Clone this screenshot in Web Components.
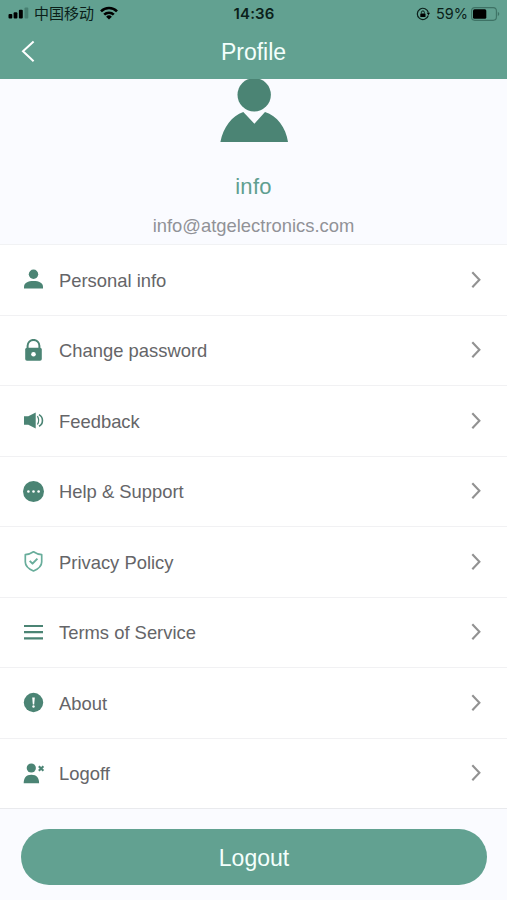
<!DOCTYPE html>
<html lang="en">
<head>
<meta charset="utf-8">
<title>Profile</title>
<style>
html,body{margin:0;height:100%}
body{background:#fafbff;font-family:"Liberation Sans","Noto Sans CJK SC",sans-serif}
</style>
</head>
<body>
<profile-screen></profile-screen>
<script>
const define = (name, html, setup) => {
  const template = document.createElement('template');
  template.innerHTML = html;
  customElements.define(name, class extends HTMLElement {
    constructor() {
      super();
      this.attachShadow({ mode: 'open' }).append(template.content.cloneNode(true));
    }
    connectedCallback() { if (setup) setup(this, this.shadowRoot); }
  });
};

const icons = {
  person: '<circle cx="11.5" cy="6.3" r="4.7"/><path d="M2 20.6v-1.8c0-4 4-5.9 9.5-5.9s9.5 1.9 9.5 5.9v1.8z"/>',
  lock: '<path d="M5.6 10V6.8a5.9 5.9 0 0 1 11.8 0V10" fill="none" stroke="currentColor" stroke-width="2"/><rect x="3.2" y="8.7" width="16.6" height="13" rx="1.8"/><circle cx="11.5" cy="15.2" r="2.3" fill="#fff"/>',
  sound: '<path d="M2 7.300h4.300L13.700 3.400v16.200L6.300 15.700H2z"/><path d="M15.400 7.100q2.600 4.200 0 8.400" fill="none" stroke="currentColor" stroke-width="1.200"/><path d="M17 5.600c4.600 2.400 4.600 9.400 0 11.600" fill="none" stroke="currentColor" stroke-width="1.600"/>',
  more: '<circle cx="11.5" cy="11.5" r="10.5"/><g fill="#fff"><circle cx="6.400" cy="11.500" r="1.300"/><circle cx="11.500" cy="11.500" r="1.300"/><circle cx="16.600" cy="11.500" r="1.300"/></g>',
  shield: '<g fill="none" stroke="#68ad9b" stroke-width="1.700" stroke-linejoin="round"><path d="M11.500 1.800Q15.400 4.400 19.700 4.700V12c0 4.400-4.200 7.300-8.200 9-4-1.700-8.200-4.600-8.200-9V4.700Q7.600 4.400 11.500 1.800z"/><path d="M7.700 10.900l2.800 2.700 4.900-5" stroke-width="2"/></g>',
  lines: '<path d="M2 5h19M2 11.200h19M2 17.400h19" fill="none" stroke="currentColor" stroke-width="2.200"/>',
  alert: '<circle cx="11.500" cy="11.500" r="9.700"/><path d="M10.200 6.500h2.600l-.6 7h-1.400z" fill="#fff"/><circle cx="11.500" cy="15.500" r="1.200" fill="#fff"/>',
  logoff: '<circle cx="9.300" cy="6" r="4.600"/><path d="M1.700 21.200C1.700 16.200 4 12.800 9.400 12.800s7.700 3.400 7.700 8.400z"/><path d="M16.800 4.200l4.600 4.500M21.400 4.200l-4.600 4.500" fill="none" stroke="currentColor" stroke-width="2.100"/>'
};

define('status-bar', `<style>
:host{display:grid;grid-template-columns:1fr auto 1fr;align-items:center;height:27px;padding:0 7px 0 8px;color:#0b1f1a;font-size:15px}
.side{display:flex;align-items:center;margin-top:-1px}
.end{justify-content:flex-end;margin-top:0}
.carrier{font:15px/20px "Noto Sans CJK SC",sans-serif;margin:0 6px 0 5px}
.time{font:600 15px/20px Inter,sans-serif;letter-spacing:.1px}
.pct{font:14.500px/20px Inter,sans-serif;margin:0 3px 0 6px}
svg{display:block;flex:none}
</style>
<div class="side">
<svg width="21" height="12" viewBox="0 0 21 12"><g fill="#000"><rect x=".5" y="7" width="3.800" height="4.500" rx="1"/><rect x="5.600" y="5.200" width="3.800" height="6.300" rx="1"/><rect x="10.900" y="2.800" width="3.900" height="8.700" rx="1"/></g><rect x="16.500" y=".5" width="3.800" height="11" rx="1" fill="#477f71"/></svg>
<span class="carrier">中国移动</span>
<svg width="18" height="14" viewBox="0 0 18 14"><g fill="none" stroke="#000" stroke-width="2.600"><path d="M1 5.300a11.300 11.300 0 0 1 16 0"/><path d="M4.200 8.700a6.800 6.800 0 0 1 9.600 0"/></g><path d="M6.100 10.700a4.200 4.200 0 0 1 5.800 0L9 13.600z"/></svg>
</div>
<span class="time">14:36</span>
<div class="side end">
<svg width="14" height="14" viewBox="0 0 14 14"><path d="M12.300 8.500A5.600 5.600 0 1 1 12.400 5.700" fill="none" stroke="#0b1f1a" stroke-width="1.200"/><path d="M10.700 5.700h3.300l-1.500 2.500z"/><rect x="4.300" y="6.500" width="5.200" height="3.500" rx=".5"/><path d="M5.400 6.600V5.400a1.500 1.500 0 0 1 3 0v1.200" fill="none" stroke="#0b1f1a"/></svg>
<span class="pct">59%</span>
<svg width="29" height="14" viewBox="0 0 29 14"><rect x=".6" y=".6" width="24.800" height="12.800" rx="3.300" fill="none" stroke="#3e7265" stroke-width="1.100"/><rect x="2" y="2.200" width="13.300" height="9.600" rx="1.500"/><path d="M26.800 4.800q3 2.200 0 4.400z" fill="#3e7265"/></svg>
</div>`);

define('nav-bar', `<style>
:host{display:grid;grid-template-columns:1fr auto 1fr;align-items:center;height:52px;padding:0 21px;color:#f4fffc;font-size:23px}
svg{display:block;margin-bottom:3px}
span{line-height:30px;margin-bottom:2px}
</style>
<svg width="16" height="24" viewBox="0 0 16 24"><path d="M12.600 1.500L2 11.200 12.600 21.200" fill="none" stroke="#fff" stroke-width="2"/></svg>
<span><slot></slot></span>`);

define('profile-summary', `<style>
:host{display:flex;flex-direction:column;align-items:center;height:165px;background:#fafbff}
svg{display:block;flex:none}
.name{color:#609f90;font-size:22px;line-height:28px;margin-top:30px;letter-spacing:.3px}
.mail{color:#919297;font-size:18.400px;line-height:24px;margin-top:13px}
</style>
<svg width="70" height="64" viewBox="0 0 70 64" fill="#4b8474"><circle cx="35.200" cy="15.800" r="16.700"/><path d="M1.400 63C4 49 13 36.500 24.300 33.100L35.400 44.700 46 33.100C58 36.500 67 49 69 63z"/></svg>
<span class="name"><slot name="name"></slot></span>
<span class="mail"><slot name="mail"></slot></span>`);

define('menu-row', `<style>
:host{display:flex;align-items:center;box-sizing:border-box;flex:1;border-bottom:1px solid #f1f1f3;padding:0 24px 0 22px;color:#656568}
.icon{width:23px;height:23px;display:block;fill:currentColor;color:#4b8474;flex:none}
.label{font-size:18.400px;line-height:24px;margin-left:14px;flex:1;padding-top:2px}
</style>
<svg class="icon" viewBox="0 0 23 23"></svg>
<span class="label"><slot></slot></span>
<svg width="13" height="18" viewBox="0 0 13 18"><path d="M2.300 1.300L9.400 8.800 2.300 16.300" fill="none" stroke="#929292" stroke-width="2.100"/></svg>`,
(host, root) => { root.querySelector('.icon').innerHTML = icons[host.getAttribute('icon')]; });

define('menu-list', `<style>
:host{display:flex;flex-direction:column;height:565px;box-sizing:border-box;border-top:1px solid #f1f2f4;background:#fff}
::slotted(:last-child){border-bottom-color:#e9eaed}
</style><slot></slot>`);

define('pill-button', `<style>
:host{display:block;padding:20px 20px 0 21px}
button{display:block;width:100%;height:56px;border:0;border-radius:28px;background:#62a191;color:#f4fffc;font:23px/30px "Liberation Sans",sans-serif;padding:1px 0 0}
</style><button><slot></slot></button>`);

define('profile-screen', `<style>
:host{display:block;height:900px;overflow:hidden}
header{background:#62a191}
</style>
<header><status-bar></status-bar><nav-bar>Profile</nav-bar></header>
<profile-summary><span slot="name">info</span><span slot="mail">info@atgelectronics.com</span></profile-summary>
<menu-list>
<menu-row icon="person">Personal info</menu-row>
<menu-row icon="lock">Change password</menu-row>
<menu-row icon="sound">Feedback</menu-row>
<menu-row icon="more">Help &amp; Support</menu-row>
<menu-row icon="shield">Privacy Policy</menu-row>
<menu-row icon="lines">Terms of Service</menu-row>
<menu-row icon="alert">About</menu-row>
<menu-row icon="logoff">Logoff</menu-row>
</menu-list>
<pill-button>Logout</pill-button>`);
</script>
</body>
</html>
